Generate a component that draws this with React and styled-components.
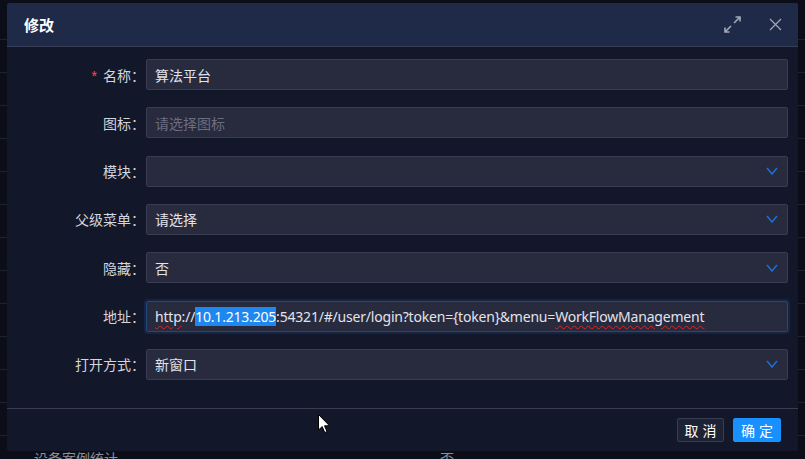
import React from 'react'
import styled, { createGlobalStyle } from 'styled-components'

const GlobalStyle = createGlobalStyle`
  body {
    margin: 0;
    background: #0b0e19;
    font-family: "Noto Sans", "Noto Sans CJK SC", sans-serif;
  }
`

const Page = styled.div`
  position: relative;
  width: 805px;
  height: 459px;
  overflow: hidden;
  background: #0b0e19;
`

const BgTable = styled.div`
  padding-top: 7px;
`

const BgRow = styled.div`
  display: flex;
  box-sizing: border-box;
  height: 33px;
  border-bottom: 1px solid #1d2133;
  padding-top: ${(p) => (p.$text ? '13px' : '0')};
  color: #8d8f99;
  font-size: 14px;
  line-height: 20px;
`

const BgCell = styled.div`
  width: ${(p) => p.$w}px;
  box-sizing: border-box;
`

const Modal = styled.div`
  position: absolute;
  left: 7px;
  top: 3px;
  width: 791px;
  background: #13172a;
  border-radius: 2px;
  overflow: hidden;
`

const Header = styled.div`
  display: flex;
  align-items: center;
  justify-content: space-between;
  box-sizing: border-box;
  height: 44px;
  padding: 0 16px 0 17px;
  background: #1f2a48;
  border-bottom: 1px solid #3a3f58;
`

const Title = styled.div`
  color: #ffffff;
  font-size: 15px;
  font-weight: 700;
`

const Tools = styled.div`
  display: flex;
  align-items: center;
  gap: 27px;
`

const ToolIcon = styled.svg`
  display: block;
  color: #a4a8b6;
`

const Body = styled.div`
  display: flex;
  flex-direction: column;
  gap: 17.33px;
  padding: 12px 10px 28px 0;
`

const Row = styled.div`
  display: grid;
  grid-template-columns: 139px 1fr;
  align-items: center;
  height: 31px;
`

const Label = styled.div`
  text-align: right;
  color: #d4d6de;
  font-size: 14px;
  padding-right: 1px;
`

const Star = styled.span`
  color: #ff4d4f;
  margin-right: 6px;
  font-family: "Liberation Sans", sans-serif;
`

const Field = styled.div`
  display: flex;
  align-items: center;
  justify-content: space-between;
  box-sizing: border-box;
  height: 31px;
  padding: 0 9px 0 8px;
  background: #282a3e;
  border: 1px solid ${(p) => (p.$focus ? '#24487a' : '#3a3d52')};
  box-shadow: ${(p) => (p.$focus ? '0 0 0 2px rgba(20, 60, 120, 0.35)' : 'none')};
  border-radius: 2px;
  color: ${(p) => (p.$placeholder ? '#6b6d80' : '#e2e3ea')};
  font-size: 14px;
  letter-spacing: ${(p) => (p.$focus ? '-0.2px' : 'normal')};
  white-space: nowrap;
`

const Selected = styled.span`
  background: #1e88f0;
  color: #ffffff;
`

const Misspelled = styled.span`
  text-decoration: underline wavy #e02424;
  text-decoration-thickness: 1px;
  text-underline-offset: 3px;
`

const Footer = styled.div`
  display: flex;
  justify-content: flex-end;
  gap: 9px;
  padding: 9px 17px 9px 0;
  border-top: 1px solid #3a3d52;
`

const Button = styled.button`
  box-sizing: border-box;
  height: 24px;
  width: ${(p) => (p.$primary ? 48 : 47)}px;
  padding: 0;
  border-radius: 2px;
  border: 1px solid ${(p) => (p.$primary ? '#1890ff' : '#3a3d52')};
  background: ${(p) => (p.$primary ? '#1890ff' : '#1e2235')};
  color: #ffffff;
  font-family: "Noto Sans CJK SC", sans-serif;
  font-size: 14px;
  letter-spacing: 4px;
  text-indent: 4px;
  cursor: pointer;
`

const Cursor = styled.svg`
  position: absolute;
  left: 318px;
  top: 414px;
`

const Chevron = () => (
  <svg width="12" height="8" viewBox="0 0 12 8">
    <path d="M1 1 L6 7 L11 1" fill="none" stroke="#1f6fd6" strokeWidth="1.5" />
  </svg>
)

const Expand = () => (
  <ToolIcon width="19" height="19" viewBox="0 0 19 19">
    <path d="M11 8 L17 2 M12.5 2 H17 V6.5" fill="none" stroke="currentColor" strokeWidth="1.6" />
    <path d="M8 11 L2 17 M2 12.5 V17 H6.5" fill="none" stroke="currentColor" strokeWidth="1.6" />
  </ToolIcon>
)

const Close = () => (
  <ToolIcon width="13" height="13" viewBox="0 0 13 13">
    <path d="M1 1 L12 12 M12 1 L1 12" fill="none" stroke="currentColor" strokeWidth="1.2" />
  </ToolIcon>
)

const FormRow = ({ label, required, children }) => (
  <Row>
    <Label>
      {required && <Star>*</Star>}
      {label}：
    </Label>
    {children}
  </Row>
)

const App = () => {
  const rows = Array.from({ length: 13 })
  return (
    <Page>
      <GlobalStyle />
      <BgTable>
        {rows.map((_, i) => (
          <BgRow key={i} />
        ))}
        <BgRow $text>
          <BgCell $w={34} />
          <BgCell $w={406}>设备案例统计</BgCell>
          <BgCell $w={100}>否</BgCell>
        </BgRow>
      </BgTable>

      <Modal>
        <Header>
          <Title>修改</Title>
          <Tools>
            <Expand />
            <Close />
          </Tools>
        </Header>
        <Body>
          <FormRow label="名称" required>
            <Field>算法平台</Field>
          </FormRow>
          <FormRow label="图标">
            <Field $placeholder>请选择图标</Field>
          </FormRow>
          <FormRow label="模块">
            <Field>
              <span />
              <Chevron />
            </Field>
          </FormRow>
          <FormRow label="父级菜单">
            <Field>
              <span>请选择</span>
              <Chevron />
            </Field>
          </FormRow>
          <FormRow label="隐藏">
            <Field>
              <span>否</span>
              <Chevron />
            </Field>
          </FormRow>
          <FormRow label="地址">
            <Field $focus>
              <span>
                <Misspelled>http</Misspelled>://<Selected>10.1.213.205</Selected>
                :54321/#/user/login?token={'{token}'}&amp;menu=
                <Misspelled>WorkFlowManagement</Misspelled>
              </span>
            </Field>
          </FormRow>
          <FormRow label="打开方式">
            <Field>
              <span>新窗口</span>
              <Chevron />
            </Field>
          </FormRow>
        </Body>
        <Footer>
          <Button>取消</Button>
          <Button $primary>确定</Button>
        </Footer>
      </Modal>

      <Cursor width="13" height="20" viewBox="0 0 13 20">
        <path
          d="M0.5 0.5 L0.5 16 L4.2 12.6 L6.8 18.6 L9 17.6 L6.5 11.8 L11.5 11.8 Z"
          fill="#ffffff"
          stroke="#000000"
          strokeWidth="1"
        />
      </Cursor>
    </Page>
  )
}

export default App
